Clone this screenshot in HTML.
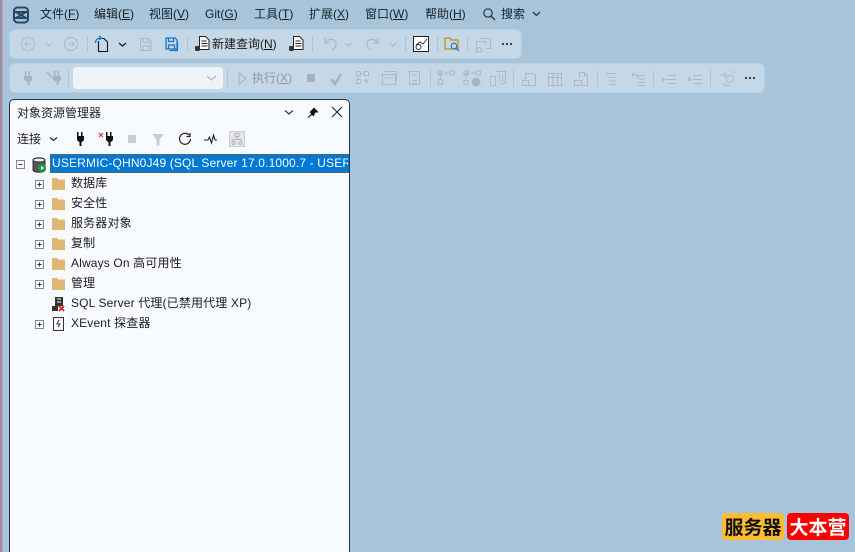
<!DOCTYPE html>
<html><head><meta charset="utf-8">
<style>
html,body{margin:0;padding:0;width:855px;height:552px;overflow:hidden;background:#a7c4db}
body{position:relative;font-family:"DejaVu Sans","Noto Sans CJK SC",sans-serif;font-size:11px;color:#1a1a1a}
.t{position:absolute;white-space:nowrap;line-height:16px;font-family:"Liberation Sans","Noto Sans CJK SC",sans-serif;font-size:12px}
.m{top:6px;color:#14202a}
.u{text-decoration:underline;text-underline-offset:1px}
.bar{position:absolute;background:#c4d8e8;border-radius:5px;box-shadow:0 0 0 1px #b7cfe2}
.tree{font-size:12px;color:#1c1c1c;letter-spacing:.15px}
svg{position:absolute;left:0;top:0}
</style></head><body>
<div style="position:absolute;left:0;top:0;width:2px;height:552px;background:#a08ba3"></div>
<div style="position:absolute;left:2px;top:0;width:1px;height:552px;background:#a9a6bd"></div>

<div class="bar" style="left:10px;top:30px;width:511px;height:28px"></div>
<div class="bar" style="left:10px;top:64px;width:754px;height:28px"></div>
<div style="position:absolute;left:73px;top:67px;width:150px;height:22px;background:#edf3f8;border-radius:4px"></div>

<div style="position:absolute;left:9px;top:99px;width:339px;height:460px;background:#f8fbfe;border:1px solid #1f3a52;border-radius:5px 5px 0 0"></div>
<div style="position:absolute;left:50px;top:154px;width:299px;height:19px;background:#0078d4;border-top:1px dotted #8a5a20;border-bottom:1px dotted #8a5a20;border-left:1px dotted #8a5a20;box-sizing:border-box"></div>

<span class="t m" style="left:40px">文件(<span class="u">F</span>)</span>
<span class="t m" style="left:94px">编辑(<span class="u">E</span>)</span>
<span class="t m" style="left:149px">视图(<span class="u">V</span>)</span>
<span class="t m" style="left:205px">Git(<span class="u">G</span>)</span>
<span class="t m" style="left:254px">工具(<span class="u">T</span>)</span>
<span class="t m" style="left:309px">扩展(<span class="u">X</span>)</span>
<span class="t m" style="left:365px">窗口(<span class="u">W</span>)</span>
<span class="t m" style="left:425px">帮助(<span class="u">H</span>)</span>
<span class="t m" style="left:501px">搜索</span>

<span class="t" style="left:212px;top:36px;color:#1a1a1a">新建查询(<span class="u">N</span>)</span>
<span class="t" style="left:252px;top:70px;color:#8c9aa6">执行(<span class="u">X</span>)</span>

<span class="t" style="left:17px;top:105px;color:#222">对象资源管理器</span>
<span class="t" style="left:17px;top:131px;color:#222">连接</span>

<span class="t tree" style="left:52px;top:155px;width:296px;overflow:hidden;color:#fff">USERMIC-QHN0J49 (SQL Server 17.0.1000.7 - USERMIC-QHN0J49\Admin)</span>
<span class="t tree" style="left:71px;top:175px">数据库</span>
<span class="t tree" style="left:71px;top:195px">安全性</span>
<span class="t tree" style="left:71px;top:215px">服务器对象</span>
<span class="t tree" style="left:71px;top:235px">复制</span>
<span class="t tree" style="left:71px;top:255px">Always On 高可用性</span>
<span class="t tree" style="left:71px;top:275px">管理</span>
<span class="t tree" style="left:71px;top:295px">SQL Server 代理(已禁用代理 XP)</span>
<span class="t tree" style="left:71px;top:315px">XEvent 探查器</span>

<div style="position:absolute;left:722px;top:513px;width:62px;height:27px;background:#fdbd2e;border-radius:4px;color:#111;font:bold 19px/27px 'Noto Sans CJK SC',sans-serif;text-align:center;white-space:nowrap">服务器</div>
<div style="position:absolute;left:787px;top:513px;width:62px;height:27px;background:#f00;border-radius:4px;color:#fff;font:bold 19px/27px 'Noto Sans CJK SC',sans-serif;text-align:center;white-space:nowrap">大本营</div>

<svg width="855" height="552" viewBox="0 0 855 552" fill="none">
<!-- logo -->
<g stroke="#27465f" stroke-width="2"><rect x="14" y="7.500" width="14" height="15" rx="3.500"/><path d="M15 12h12M15 18h12M16 12l10 6M26 12l-10 6"/></g>
<!-- search -->
<g stroke="#333"><circle cx="488" cy="13" r="4.200" stroke-width="1.200"/><path d="M491 16l4 4" stroke-width="1.300"/><path d="M533 12l3.500 3.500 3.500-3.500" stroke-width="1.300"/></g>
<!-- toolbar 1 -->
<g stroke="#a9bac8" stroke-width="1.100"><circle cx="28" cy="44" r="6.500"/><path d="M31 44h-6m2.500-2.500L25 44l2.500 2.500"/><path d="M45 43l3.500 3 3.500-3"/><circle cx="71" cy="44" r="6.500"/><path d="M68 44h6m-2.500-2.500L74 44l-2.500 2.500"/>
<path d="M140.500 38.500h8l2.500 2.500v9.500h-10.500zM143 38.500v4h5v-4M143 50.500v-4.500h6v4.500"/></g>
<path d="M87.500 36v16M187.500 36v16M312.500 36v16M405.500 36v16M437.500 36v16M467.500 36v16" stroke="#aec3d3"/>
<path d="M98.500 41v10.500h9v-9.500l-3.500-3.500h-2" stroke="#111" stroke-width="1.100"/>
<path d="M95.500 43c0-3 2-5 5.500-5m-2-2l2.500 2-2.500 2" stroke="#1177cc" stroke-width="1.200"/>
<path d="M119 43l3.500 3 3.500-3" stroke="#222" stroke-width="1.300"/>
<g stroke="#1673c4" stroke-width="1.200"><path d="M166 38h9l2 2v9h-11zM168.500 38v3.500h5V38M168.500 49v-4h6v4"/><path d="M177.500 42v8.500h-8"/></g>
<!-- query icons -->
<g><path d="M199.500 36.500h6l3.500 3.500v9.500h-9.500z" fill="#fff" stroke="#222"/><path d="M201.500 41h5M201.500 43.500h6M201.500 46h6" stroke="#222"/><rect x="195" y="46" width="5" height="5" rx="1.500" fill="#333"/>
<path d="M293.500 36.500h6l3.500 3.500v9.500h-9.500z" fill="#fff" stroke="#222"/><path d="M295.500 41h5M295.500 43.500h6M295.500 46h6" stroke="#222"/><rect x="289" y="46" width="5" height="5" rx="1.500" fill="#333"/></g>
<g stroke="#a9bac8" stroke-width="1.200"><path d="M325 38v5h5M325 43c3-5 11-5 11 1 0 3-2 5-4 6"/><path d="M345 43l3.500 3 3.500-3"/><path d="M378 38v5h-5M378 43c-3-5-11-5-11 1 0 3 2 5 4 6"/><path d="M389 43l3.500 3 3.500-3"/></g>
<rect x="413.500" y="36.500" width="15" height="15" fill="#fff" stroke="#222"/><path d="M416 45l4-3 3 2 4-5" stroke="#333"/><circle cx="418.500" cy="47" r="2.500" stroke="#333"/>
<path d="M445 38h5l1 2h7v9h-13z" stroke="#c48a1a" stroke-width="1.200"/><circle cx="454" cy="46" r="2.800" fill="#c4d8e8" stroke="#1a78c8" stroke-width="1.100"/><path d="M456 48l3 3" stroke="#1a78c8" stroke-width="1.200"/>
<g stroke="#a9bac8"><path d="M479.500 38.500h11v10h-4M476.500 41.500h9v3M476.500 41.500v8"/><path d="M476 50l3-3 3 3v2h-6z"/></g>
<g fill="#333"><circle cx="503" cy="44" r="1.100"/><circle cx="507" cy="44" r="1.100"/><circle cx="511" cy="44" r="1.100"/></g>
<!-- toolbar 2 -->
<g fill="#a3b3c0"><path d="M25 71h1.500v5h2v-5H30v5h2v4l-2.500 2v3h-2v-3L25 80l-1-0v-4h1z"/><path d="M54 71h1.500v5h2v-5H59v5h2v4l-2.500 2v3h-2v-3L54 80l-1-0v-4h1z"/></g>
<path d="M47 72l6 6" stroke="#a3b3c0" stroke-width="1.500"/>
<g stroke="#a9bac8"><path d="M207 76l4.500 4 4.500-4" stroke-width="1.200"/><path d="M239 73v11l7-5.500z" stroke-width="1.200"/></g>
<path d="M68.500 70v17M227.500 70v17M430.500 70v17M513.500 70v17M597.500 70v17M653.500 70v17M710.500 70v17" stroke="#aec3d3"/>
<rect x="307" y="74" width="8" height="8" fill="#a3b3c0"/>
<path d="M331 79l4 5 6-10" stroke="#a3b3c0" stroke-width="2.600"/>
<g stroke="#a9bac8">
<path d="M356.500 71.500h4v4h-4zM364.500 71.500h4v4h-4zM356.500 79.500h4v4h-4zM364.500 80l2 3 2-3zM358.500 75.500v4M360.500 73.500h4"/>
<path d="M382.500 74.500h13v10h-13zM385 71.500h11.500v9M385 78h8"/>
<path d="M409.500 71.500h10v13h-10zM412 80.500h5M412 83h5M412 75h5"/>
<path d="M438.500 79.500v5h4v-5zM440.500 79v-6M438 75l2.500-2.500L443 75M445 73h4M447 71.500l-1.500 1.500 1.500 1.500M450 71h4.500v4H450zM438 71h4.500v4H438z"/>
<path d="M464 84.500h4v-4h-4zM466 80v-7M464 75l2.500-2.500L469 75M471 73h4M476 71h4.500v4H476zM464 71h4.500v4H464z"/><circle cx="476" cy="82" r="4" fill="#a3b3c0"/>
<path d="M490.500 76.500h5v9h-5zM496.500 71.500h9v12h-5M499.500 74v8M502.500 74v8"/>
<path d="M525.500 73.500h7l3 2v10h-6M525.500 73.500v6M522.500 80.500h6v5h-6z"/>
<path d="M548.500 73.500h13v12h-13zM548.500 77.500h13M553 74v11M557.500 74v11" stroke-width="1"/>
<path d="M579.500 72.500h5l3 3v10h-6M579.500 72.500v6M574.500 80.500h7v5h-7zM584.500 73v3h3"/>
<path d="M606 73.500h10M609 77.500h7M609 81h7M609 84.500h7"/>
<path d="M634 72.500l-2 2 2 2M632 74.500h3c3 0 3 3 1 4M638 75.500h7M638 79h7M638 82.500h7M638 85.500h7"/>
<path d="M662 79.500h14M668 75.500h8M668 83.500h8M662 79.500l2-2M662 79.500l2 2"/>
<path d="M688 79l2-2v4zM693 75.500h9M693 79.500h9M693 83.500h9"/>
<circle cx="730" cy="79" r="3.500"/><path d="M720 75h6M724 73l2.500 2-2.500 2M723 84c2 2 5 2 7 1M735 72h-3"/></g>
<g fill="#333"><circle cx="746" cy="78" r="1.100"/><circle cx="750" cy="78" r="1.100"/><circle cx="754" cy="78" r="1.100"/></g>
<!-- panel title -->
<path d="M285 110.500l4 3.500 4-3.500" stroke="#333" stroke-width="1.200"/>
<path d="M308 117.500l3.500-3.500-1.500-2 4-4 4 4-3 .5-1.500 3.500-1.500-1.500-3.500 3z" fill="#111" stroke="#111" stroke-width=".6"/>
<path d="M332 107l10 10M342 107l-10 10" stroke="#222" stroke-width="1.100"/>
<!-- panel toolbar -->
<path d="M50 137.500l3.500 3 3.500-3" stroke="#222" stroke-width="1.200"/>
<g fill="#111"><path d="M77 132h1.500v4h2.500v-4h1.500v4H84v4l-2 2h-.500v4h-2v-4H79l-2-2v-4h0z"/><path d="M106 132h1.500v4h2.500v-4h1.500v4h1.500v4l-2 2h-.500v4h-2v-4H108l-2-2v-4z"/></g>
<path d="M99 133l4 4M103 133l-4 4" stroke="#d33" stroke-width="1.200"/>
<rect x="128" y="135" width="8" height="8" fill="#c9ccd0"/>
<path d="M152 134h12l-4.500 5.500v6h-3v-6z" fill="#c9ccd0"/>
<path d="M189 135a5.500 5.500 0 1 0 1.500 4M190 133v3.500h-3.500" stroke="#222" stroke-width="1.200"/>
<path d="M204 140h4l1.500-3 2 6 2-8 1.500 5h2" stroke="#222" stroke-width="1.100"/>
<rect x="229.500" y="131.500" width="15" height="15" fill="#e4e6e8" stroke="#ccd0d3"/>
<path d="M235 133.500h4v3h-4zM237 136.500v3M233 141v-1.500h8v1.500" stroke="#b4b8bc"/><circle cx="233.500" cy="143" r="1.500" stroke="#b4b8bc"/><circle cx="240.500" cy="143" r="1.500" stroke="#b4b8bc"/>
<!-- tree -->
<rect x="16.500" y="160.500" width="8" height="8" stroke="#888"/><path d="M18.500 164.500h4" stroke="#444"/>
<path d="M33 160c0-3 12-3 12 0v10c0 3-12 3-12 0z" fill="#555" stroke="#333"/><ellipse cx="39" cy="160" rx="6" ry="2" fill="#eee" stroke="#333"/>
<circle cx="42" cy="168" r="4" fill="#1d9a44"/><path d="M41 166v4l3-2z" fill="#fff"/>
<g transform="translate(-.5,0)">
<path d="M36 180.500h8v8h-8zM36 200.500h8v8h-8zM36 220.500h8v8h-8zM36 240.500h8v8h-8zM36 260.500h8v8h-8zM36 280.500h8v8h-8zM36 320.500h8v8h-8z" stroke="#7d8b99"/>
<path d="M38 184.500h4M40 182.500v4M38 204.500h4M40 202.500v4M38 224.500h4M40 222.500v4M38 244.500h4M40 242.500v4M38 264.500h4M40 262.500v4M38 284.500h4M40 282.500v4M38 324.500h4M40 322.500v4" stroke="#333"/>
</g>
<g fill="#dfb878"><path d="M52 178h5l1.500 1.500H65V190H52z"/><path d="M52 198h5l1.500 1.500H65V210H52z"/><path d="M52 218h5l1.500 1.500H65V230H52z"/><path d="M52 238h5l1.500 1.500H65V250H52z"/><path d="M52 258h5l1.500 1.500H65V270H52z"/><path d="M52 278h5l1.500 1.500H65V290H52z"/></g>
<rect x="55" y="297" width="8" height="9" fill="#333"/><path d="M57 299h4M57 302h4" stroke="#fff"/><path d="M52 306h6v5h-6z" fill="#333"/>
<path d="M59 306l5 5M64 306l-5 5" stroke="#d22" stroke-width="1.800"/>
<rect x="53.500" y="317.500" width="10" height="13" fill="#f8fbfe" stroke="#333"/><path d="M59 320l-2 4h3l-2 3" stroke="#333"/>
</svg>
</body></html>
